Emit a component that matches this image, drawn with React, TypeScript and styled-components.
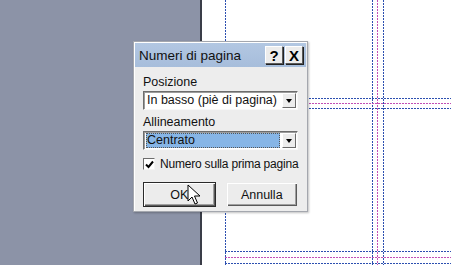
import React from "react";
import styled, { createGlobalStyle } from "styled-components";

const Global = createGlobalStyle`
  html, body { margin: 0; padding: 0; }
  body { width: 451px; height: 265px; overflow: hidden; font-family: "Liberation Sans", Arial, sans-serif; }
  #root { width: 451px; height: 265px; }
`;

const Screen = styled.div`
  position: relative;
  width: 451px;
  height: 265px;
  display: flex;
  overflow: hidden;
`;

const Desk = styled.div`
  width: 200px;
  background: #8c93a7;
`;

const PageEdge = styled.div`
  width: 2px;
  background: #3a3d48;
`;

const Page = styled.div`
  position: relative;
  flex: 1;
  background: #ffffff;
`;

const VGuide = styled.div<{ $x: number; $c: string }>`
  position: absolute;
  top: 0;
  bottom: 0;
  width: 1px;
  left: ${(p) => p.$x}px;
  background: repeating-linear-gradient(to bottom, ${(p) => p.$c} 0 2px, transparent 2px 3px);
`;

const HGuide = styled.div<{ $y: number; $c: string }>`
  position: absolute;
  left: 23px;
  right: 0;
  height: 1px;
  top: ${(p) => p.$y}px;
  background: repeating-linear-gradient(to right, ${(p) => p.$c} 0 2px, transparent 2px 3px);
`;

const Dialog = styled.div`
  position: absolute;
  left: 133px;
  top: 41px;
  width: 175px;
  height: 171px;
  box-sizing: border-box;
  background: #ededed;
  border: 1px solid #a4a7ae;
  box-shadow: inset 1px 1px 0 #ffffff, 1px 1px 2px rgba(0,0,0,0.25);
  display: flex;
  flex-direction: column;
`;

const TitleBar = styled.div`
  height: 24px;
  margin: 1px 1px 0 1px;
  background: linear-gradient(#b2c7e2, #a6bddb);
  display: flex;
  align-items: center;
  padding: 0 3px 0 4px;
  gap: 2px;
`;

const Title = styled.div`
  flex: 1;
  font-size: 13.5px;
  color: #111;
`;

const TitleBtn = styled.div`
  width: 18px;
  height: 18px;
  box-sizing: border-box;
  background: #ececec;
  border: 1px solid;
  border-color: #ffffff #5a5a5a #5a5a5a #ffffff;
  box-shadow: 1px 1px 0 #222;
  display: flex;
  align-items: center;
  justify-content: center;
  font: bold 15px "Liberation Sans", Arial, sans-serif;
  color: #000;
`;

const Body = styled.div`
  padding: 7px 9px 0 9px;
  display: flex;
  flex-direction: column;
`;

const Label = styled.div`
  font-size: 12.5px;
  color: #111;
  height: 16px;
  line-height: 16px;
  margin-bottom: 1px;
  white-space: nowrap;
`;

const Combo = styled.div`
  height: 19px;
  box-sizing: border-box;
  border: 1px solid;
  border-color: #6d6d6d #f8f8f8 #f8f8f8 #6d6d6d;
  box-shadow: inset 1px 1px 0 #9c9c9c;
  background: #fff;
  display: flex;
  align-items: stretch;
  padding: 1px 1px 1px 2px;
  margin-bottom: 4px;
`;

const ComboText = styled.div<{ $selected?: boolean }>`
  flex: 1;
  font-size: 12.5px;
  line-height: 15px;
  padding-left: 1px;
  white-space: nowrap;
  color: #111;
  background: ${(p) => (p.$selected ? "#86b5e6" : "transparent")};
  outline: ${(p) => (p.$selected ? "1px dotted #555" : "none")};
  outline-offset: -1px;
  margin-right: 2px;
`;

const ArrowBtn = styled.div`
  width: 14px;
  box-sizing: border-box;
  background: #ececec;
  border: 1px solid;
  border-color: #ffffff #6a6a6a #6a6a6a #ffffff;
  display: flex;
  align-items: center;
  justify-content: center;
`;

const Arrow = styled.div`
  width: 0;
  height: 0;
  border-left: 3.5px solid transparent;
  border-right: 3.5px solid transparent;
  border-top: 4px solid #000;
`;

const CheckRow = styled.div`
  display: flex;
  align-items: center;
  gap: 5px;
  margin-top: 3px;
  height: 14px;
`;

const Box = styled.div`
  width: 12px;
  height: 12px;
  flex: none;
  box-sizing: border-box;
  background: #fff;
  border: 1px solid;
  border-color: #6d6d6d #f4f4f4 #f4f4f4 #6d6d6d;
  display: flex;
  align-items: center;
  justify-content: center;
`;

const CheckText = styled.div`
  font-size: 12px;
  letter-spacing: -0.2px;
  white-space: nowrap;
  color: #111;
`;

const Buttons = styled.div`
  display: flex;
  gap: 10px;
  margin-top: 11px;
`;

const Btn = styled.div<{ $default?: boolean }>`
  width: 75px;
  height: 25px;
  box-sizing: border-box;
  background: #ececec;
  border: 1px solid ${(p) => (p.$default ? "#2a2a2a" : "#ececec")};
  box-shadow: inset 1px 1px 0 #ffffff, inset -1px -1px 0 #5a5a5a, inset -2px -2px 0 #a0a0a0;
  display: flex;
  align-items: center;
  justify-content: center;
  font-size: 12.5px;
  color: #111;
`;

const Cursor = styled.svg`
  position: absolute;
  left: 187px;
  top: 184px;
`;

export default function App() {
  return (
    <>
      <Global />
      <Screen>
        <Desk />
        <PageEdge />
        <Page>
          <VGuide $x={23} $c="#2c4fb0" />
          <VGuide $x={170} $c="#2c4fb0" />
          <VGuide $x={175} $c="#c24fb4" />
          <VGuide $x={181} $c="#2c4fb0" />
          <HGuide $y={98} $c="#2c4fb0" />
          <HGuide $y={103} $c="#c24fb4" />
          <HGuide $y={108} $c="#2c4fb0" />
          <HGuide $y={251} $c="#2c4fb0" />
          <HGuide $y={257} $c="#c24fb4" />
          <HGuide $y={263} $c="#2c4fb0" />
        </Page>
        <Dialog>
          <TitleBar>
            <Title>Numeri di pagina</Title>
            <TitleBtn>?</TitleBtn>
            <TitleBtn>X</TitleBtn>
          </TitleBar>
          <Body>
            <Label>Posizione</Label>
            <Combo>
              <ComboText>In basso (piè di pagina)</ComboText>
              <ArrowBtn><Arrow /></ArrowBtn>
            </Combo>
            <Label>Allineamento</Label>
            <Combo>
              <ComboText $selected>Centrato</ComboText>
              <ArrowBtn><Arrow /></ArrowBtn>
            </Combo>
            <CheckRow>
              <Box>
                <svg width="9" height="9" viewBox="0 0 9 9">
                  <path d="M1 4.5 L3.5 7 L8 1.5" fill="none" stroke="#000" strokeWidth="2" />
                </svg>
              </Box>
              <CheckText>Numero sulla prima pagina</CheckText>
            </CheckRow>
            <Buttons>
              <Btn $default>OK</Btn>
              <Btn>Annulla</Btn>
            </Buttons>
          </Body>
        </Dialog>
        <Cursor width="14" height="23" viewBox="0 0 14 23">
          <path d="M1 1 L1 17 L5 13 L8 20 L10.5 19 L7.5 12 L13 12 Z" fill="#fff" stroke="#000" strokeWidth="1" strokeLinejoin="round" />
        </Cursor>
      </Screen>
    </>
  );
}
